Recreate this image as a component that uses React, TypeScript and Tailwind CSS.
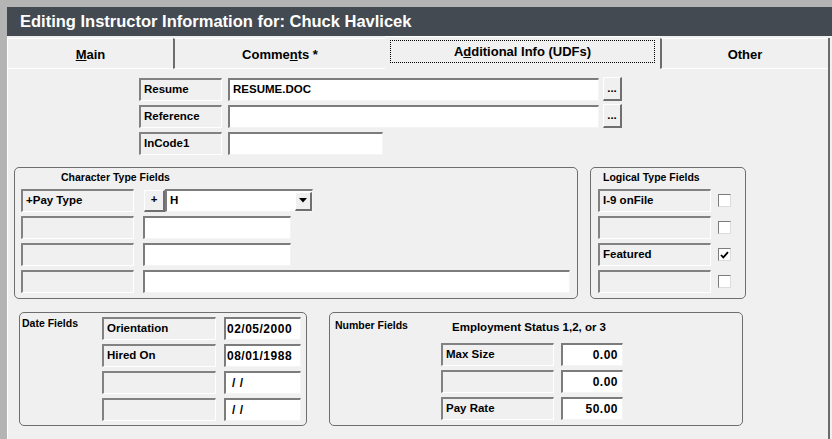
import React from "react";

const Label = ({ text, w }: { text?: string; w: string }) => (
  <div
    className={`${w} h-[23px] shrink-0 flex items-center pl-[3px] bg-[#f0f0f0] border-t-2 border-l-2 border-r border-b border-t-[#828282] border-l-[#828282] border-r-white border-b-white text-[11.5px] font-bold text-black whitespace-nowrap`}
  >
    {text}
  </div>
);

const Field = ({
  value,
  w,
  right,
  pad = "pl-[3px]",
  num,
}: {
  value?: string;
  w: string;
  right?: boolean;
  pad?: string;
  num?: boolean;
}) => (
  <div
    className={`${w} h-[23px] shrink-0 flex items-center bg-white border-t-2 border-l-2 border-r border-b border-t-[#7c7c7c] border-l-[#7c7c7c] border-r-[#f4f4f4] border-b-[#f4f4f4] font-bold text-black whitespace-nowrap ${
      num ? "text-[12px] tracking-[0.5px]" : "text-[11.5px]"
    } ${right ? "justify-end pr-[4px]" : pad}`}
  >
    {value}
  </div>
);

const RaisedButton = ({ children, cls }: { children: React.ReactNode; cls: string }) => (
  <div
    className={`${cls} shrink-0 flex items-center justify-center bg-[#f0f0f0] border-t border-l border-r-2 border-b-2 border-t-white border-l-white border-r-[#6f6f6f] border-b-[#6f6f6f] text-[11.5px] font-bold text-black`}
  >
    {children}
  </div>
);

const Check = ({ on }: { on?: boolean }) => (
  <div className="w-[13px] h-[13px] shrink-0 bg-white border-t border-l border-r border-b border-t-[#7c7c7c] border-l-[#7c7c7c] border-r-[#dcdcdc] border-b-[#dcdcdc] flex items-center justify-center">
    {on && (
      <svg width="9" height="8" viewBox="0 0 9 8">
        <path d="M1 4 L3.3 6.4 L8 1.2" stroke="#000" strokeWidth="1.8" fill="none" />
      </svg>
    )}
  </div>
);

const App = () => {
  return (
    <div className="w-[832px] h-[439px] overflow-hidden bg-[#b4b4b4] pt-[7px] pl-[7px] font-['Liberation_Sans',Arial,sans-serif] text-black">
      {/* title bar */}
      <div className="h-[29px] bg-[#434a52] flex items-center pl-[13px] text-white font-bold text-[16.5px] whitespace-nowrap">
        Editing Instructor Information for: Chuck Havlicek
      </div>

      <div className="h-[403px] bg-[#f0f0f0] flex">
        <div className="w-[821px] shrink-0 flex flex-col">
          {/* tabs */}
          <div className="h-[33px] flex items-end">
            <div className="w-[166px] h-[31px] border-t border-l border-b border-white flex items-center justify-center pt-[2px] text-[13px] font-bold">
              <span>
                <u className="underline-offset-[1px]">M</u>ain
              </span>
            </div>
            <div className="w-[212px] h-[31px] border-t border-b border-white border-l-2 border-l-[#6d6d6d] flex items-center justify-center pt-[2px] text-[13px] font-bold">
              <span>
                Comme<u className="underline-offset-[1px]">n</u>ts *
              </span>
            </div>
            <div className="w-[275px] h-[33px] border-t border-white px-[5px] pt-[3px]">
              <div className="h-[23px] border border-dotted border-black flex items-center justify-center text-[13px] font-bold">
                <span>
                  A<u className="underline-offset-[1px]">d</u>ditional Info (UDFs)
                </span>
              </div>
            </div>
            <div className="w-[168px] h-[31px] border-t border-b border-white border-l-2 border-l-[#6d6d6d] flex items-center justify-center pt-[2px] text-[13px] font-bold">
              Other
            </div>
          </div>

          {/* body */}
          <div className="flex-1 border-l border-white flex flex-col">
            <div className="pl-[131px] pt-[8px] flex flex-col">
              <div className="flex items-center">
                <Label text="Resume" w="w-[83px]" />
                <div className="ml-[6px]">
                  <Field value="RESUME.DOC" w="w-[371px]" pad="pl-[3px]" />
                </div>
                <RaisedButton cls="ml-[4px] w-[19px] h-[24px]">...</RaisedButton>
              </div>
              <div className="flex items-center mt-[3px]">
                <Label text="Reference" w="w-[83px]" />
                <div className="ml-[6px]">
                  <Field w="w-[371px]" />
                </div>
                <RaisedButton cls="ml-[4px] w-[19px] h-[24px]">...</RaisedButton>
              </div>
              <div className="flex items-center mt-[4px]">
                <Label text="InCode1" w="w-[83px]" />
                <div className="ml-[6px]">
                  <Field w="w-[155px]" />
                </div>
              </div>
            </div>

            {/* character / logical groups */}
            <div className="flex pl-[6px] mt-[12px]">
              <div className="w-[564px] h-[132px] border border-[#6e6e6e] rounded-[5px] flex flex-col">
                <div className="h-[21px] pl-[46px] pt-[2px] text-[10.5px] font-bold">Character Type Fields</div>
                <div className="pl-[6px] flex flex-col gap-[4px]">
                  <div className="flex items-center">
                    <Label text="+Pay Type" w="w-[113px]" />
                    <RaisedButton cls="ml-[10px] w-[21px] h-[22px]">+</RaisedButton>
                    <div className="w-[148px] h-[23px] flex items-center bg-white border-t-2 border-l-2 border-r border-b border-t-[#7c7c7c] border-l-[#7c7c7c] border-r-[#f4f4f4] border-b-[#f4f4f4]">
                      <div className="flex-1 pl-[3px] text-[11.5px] font-bold">H</div>
                      <RaisedButton cls="w-[17px] h-[19px]">
                        <svg width="8" height="5" viewBox="0 0 8 5">
                          <polygon points="0,0 8,0 4,4.5" fill="#000" />
                        </svg>
                      </RaisedButton>
                    </div>
                  </div>
                  <div className="flex items-center">
                    <Label w="w-[113px]" />
                    <div className="ml-[9px]">
                      <Field w="w-[148px]" />
                    </div>
                  </div>
                  <div className="flex items-center">
                    <Label w="w-[113px]" />
                    <div className="ml-[9px]">
                      <Field w="w-[148px]" />
                    </div>
                  </div>
                  <div className="flex items-center">
                    <Label w="w-[113px]" />
                    <div className="ml-[9px]">
                      <Field w="w-[427px]" />
                    </div>
                  </div>
                </div>
              </div>

              <div className="ml-[12px] w-[156px] h-[132px] border border-[#6e6e6e] rounded-[5px] flex flex-col">
                <div className="h-[21px] pl-[12px] pt-[2px] text-[10.5px] font-bold">Logical Type Fields</div>
                <div className="pl-[7px] flex flex-col gap-[4px]">
                  {[
                    { t: "I-9 onFile", on: false },
                    { t: "", on: false },
                    { t: "Featured", on: true },
                    { t: "", on: false },
                  ].map((r, i) => (
                    <div key={i} className="flex items-center">
                      <Label text={r.t} w="w-[113px]" />
                      <div className="ml-[7px]">
                        <Check on={r.on} />
                      </div>
                    </div>
                  ))}
                </div>
              </div>
            </div>

            {/* date / number groups */}
            <div className="flex pl-[11px] mt-[13px]">
              <div className="w-[288px] h-[114px] border border-[#6e6e6e] rounded-[5px] flex">
                <div className="w-[82px] pl-[2px] pt-[3px] text-[10.5px] font-bold">Date Fields</div>
                <div className="pt-[4px] flex flex-col gap-[4px]">
                  {[
                    { l: "Orientation", v: "02/05/2000", p: "pl-[1px]" },
                    { l: "Hired On", v: "08/01/1988", p: "pl-[1px]" },
                    { l: "", v: "/ /", p: "pl-[6px]" },
                    { l: "", v: "/ /", p: "pl-[6px]" },
                  ].map((r, i) => (
                    <div key={i} className="flex items-center">
                      <Label text={r.l} w="w-[114px]" />
                      <div className="ml-[8px]">
                        <Field value={r.v} w="w-[77px]" pad={r.p} num />
                      </div>
                    </div>
                  ))}
                </div>
              </div>

              <div className="ml-[22px] w-[414px] h-[114px] border border-[#6e6e6e] rounded-[5px] flex">
                <div className="w-[111px] pl-[5px] pt-[5px] text-[10.5px] font-bold">Number Fields</div>
                <div className="flex flex-col">
                  <div className="h-[30px] pl-[11px] flex items-center text-[11.5px] font-bold">
                    Employment Status 1,2, or 3
                  </div>
                  <div className="flex flex-col gap-[4px]">
                    {[
                      { l: "Max Size", v: "0.00" },
                      { l: "", v: "0.00" },
                      { l: "Pay Rate", v: "50.00" },
                    ].map((r, i) => (
                      <div key={i} className="flex items-center">
                        <Label text={r.l} w="w-[113px]" />
                        <div className="ml-[7px]">
                          <Field value={r.v} w="w-[62px]" right num />
                        </div>
                      </div>
                    ))}
                  </div>
                </div>
              </div>
            </div>
          </div>
        </div>
        <div className="w-[2px] mt-[2px] bg-[#6b6b6b] shrink-0" />
      </div>
    </div>
  );
};

export default App;
